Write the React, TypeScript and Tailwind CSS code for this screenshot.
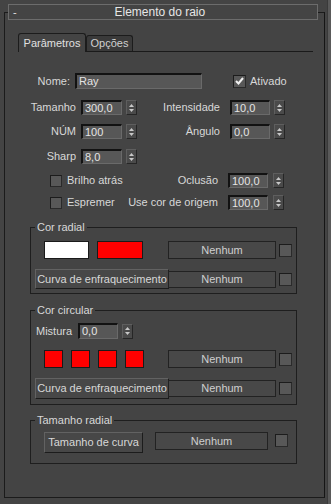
import React from 'react'

const Spinner = () => (
  <div className="w-[11px] h-[15px] shrink-0 bg-[#4a4a4a] border border-t-[#5e5e5e] border-l-[#5e5e5e] border-b-[#262626] border-r-[#262626] flex flex-col items-center justify-center gap-[2px]">
    <svg width="5" height="3" viewBox="0 0 5 3"><path d="M2.5 0 L5 3 L0 3 Z" fill="#c8c8c8" /></svg>
    <svg width="5" height="3" viewBox="0 0 5 3"><path d="M0 0 L5 0 L2.5 3 Z" fill="#c8c8c8" /></svg>
  </div>
)

const Field = ({ value, w, h = 'h-[15px]' }: { value: string; w: string; h?: string }) => (
  <div className={`${w} ${h} shrink-0 bg-[#575757] border border-t-[#121212] border-l-[#121212] border-b-[#6a6a6a] border-r-[#6a6a6a] border-t-2 border-l-2 pl-[2px] flex items-center text-[#e4e4e4] leading-none`}>
    {value}
  </div>
)

const Check = ({ on = false, size = 'w-[13px] h-[13px]' }: { on?: boolean; size?: string }) => (
  <div className={`${size} shrink-0 bg-[#585858] border border-t-[#1c1c1c] border-l-[#1c1c1c] border-b-[#2a2a2a] border-r-[#2a2a2a] flex items-center justify-center`}>
    {on && (
      <svg width="9" height="8" viewBox="0 0 9 8">
        <path d="M1 4 L3.5 6.5 L8 1" stroke="#f2f2f2" strokeWidth="2" fill="none" />
      </svg>
    )}
  </div>
)

const NoneBtn = ({ w = 'w-[108px]', h = 'h-[18px]', cls = '' }: { w?: string; h?: string; cls?: string }) => (
  <div className={`${w} ${h} ${cls} shrink-0 bg-[#484848] border border-[#222] flex items-center justify-center text-[#cfcfcf] leading-none`}>
    Nenhum
  </div>
)

const RaisedBtn = ({ label, w, h, cls = '' }: { label: string; w: string; h: string; cls?: string }) => (
  <div className={`${w} ${h} ${cls} shrink-0 bg-[#474747] border border-t-[#626262] border-l-[#626262] border-b-[#1c1c1c] border-r-[#1c1c1c] flex items-center justify-center text-[#d8d8d8] leading-none whitespace-nowrap`}>
    {label}
  </div>
)

const NumRow = ({ l1, v1, l2, v2, mt }: { l1: string; v1: string; l2: string; v2: string; mt: string }) => (
  <div className={`flex items-center h-[15px] ${mt}`}>
    <div className="w-[71px] text-right">{l1}</div>
    <div className="ml-[5px]"><Field value={v1} w="w-[41px]" /></div>
    <div className="ml-[4px]"><Spinner /></div>
    <div className="w-[83px] text-right">{l2}</div>
    <div className="ml-[10px]"><Field value={v2} w="w-[40px]" /></div>
    <div className="ml-[4px]"><Spinner /></div>
  </div>
)

const CheckRow = ({ c, l, v, mt }: { c: string; l: string; v: string; mt: string }) => (
  <div className={`flex items-center h-[15px] ${mt}`}>
    <div className="w-[213px] pl-[45px] flex items-center justify-between">
      <div className="flex items-center gap-[5px]">
        <Check size="w-[12px] h-[12px]" />
        <span>{c}</span>
      </div>
      <span>{l}</span>
    </div>
    <div className="ml-[10px]"><Field value={v} w="w-[40px]" /></div>
    <div className="ml-[5px]"><Spinner /></div>
  </div>
)

const Group = ({ title, mt, pb, children }: { title: string; mt: string; pb: string; children: React.ReactNode }) => (
  <fieldset className={`ml-[25px] w-[267px] border border-[#1e1e1e] ${mt} ${pb}`}>
    <legend className="ml-[4px] px-[2px] leading-[14px] text-[#d8d8d8]">{title}</legend>
    {children}
  </fieldset>
)

export default function App() {
  return (
    <div className="w-[331px] h-[504px] bg-[#444444] flex overflow-hidden text-[11px] text-[#d8d8d8] font-[family-name:'Liberation_Sans',Arial,sans-serif]">
      <div className="w-[327px] shrink-0">
        <div className="ml-[4px] mt-[12px] w-[321px] h-[486px] border border-[#1b1b1b] border-r-[#151515]">
          {/* rollout title */}
          <div className="-mt-[9px] ml-[3px] w-[310px] h-[16px] bg-[#444444] border border-[#6c6c6c] flex items-center relative">
            <span className="ml-[4px] text-[#e0e0e0]">-</span>
            <span className="flex-1 text-center pr-[14px] text-[#e6e6e6] text-[12px]">Elemento do raio</span>
          </div>

          {/* tabs */}
          <div className="mt-[13px] ml-[13px] w-[295px] h-[19px] border-b border-[#1a1a1a] flex items-end">
            <div className="w-[68px] h-[19px] -mb-px bg-[#444444] border border-b-0 border-[#1c1c1c] rounded-t-[3px] flex items-center justify-center text-[#e0e0e0]">
              Parâmetros
            </div>
            <div className="w-[47px] h-[16px] bg-[#3a3a3a] border border-b-0 border-[#1c1c1c] rounded-t-[3px] flex items-center justify-center text-[#d0d0d0]">
              Opções
            </div>
          </div>

          {/* name row */}
          <div className="flex items-center h-[16px] mt-[21px]">
            <div className="w-[65px] text-right">Nome:</div>
            <div className="ml-[5px]"><Field value="Ray" w="w-[127px]" h="h-[16px]" /></div>
            <div className="ml-[31px]"><Check on /></div>
            <span className="ml-[4px]">Ativado</span>
          </div>

          <NumRow l1="Tamanho" v1="300,0" l2="Intensidade" v2="10,0" mt="mt-[11px]" />
          <NumRow l1="NÚM" v1="100" l2="Ângulo" v2="0,0" mt="mt-[9px]" />

          <div className="flex items-center h-[15px] mt-[10px]">
            <div className="w-[71px] text-right">Sharp</div>
            <div className="ml-[5px]"><Field value="8,0" w="w-[41px]" /></div>
            <div className="ml-[4px]"><Spinner /></div>
          </div>

          <CheckRow c="Brilho atrás" l="Oclusão" v="100,0" mt="mt-[9px]" />
          <CheckRow c="Espremer" l="Use cor de origem" v="100,0" mt="mt-[7px]" />

          <Group title="Cor radial" mt="mt-[10px]" pb="pb-[4px]">
            <div className="flex items-center h-[18px] mt-[7px]">
              <div className="ml-[13px] w-[45px] h-[18px] bg-white border border-[#1a1a1a]" />
              <div className="ml-[8px] w-[46px] h-[18px] bg-[#ff0000] border border-[#1a1a1a]" />
              <NoneBtn cls="ml-[25px]" />
              <div className="ml-[3px]"><Check /></div>
            </div>
            <div className="flex items-center h-[20px] mt-[10px]">
              <RaisedBtn label="Curva de enfraquecimento" w="w-[134px]" h="h-[20px]" cls="ml-[4px]" />
              <NoneBtn h="h-[17px]" cls="-ml-px" />
              <div className="ml-[3px]"><Check /></div>
            </div>
          </Group>

          <Group title="Cor circular" mt="mt-[9px]" pb="pb-[5px]">
            <div className="flex items-center h-[16px] mt-[6px]">
              <div className="ml-[5px] w-[37px]">Mistura</div>
              <div className="ml-[5px]"><Field value="0,0" w="w-[40px]" h="h-[16px]" /></div>
              <div className="ml-[4px]"><Spinner /></div>
            </div>
            <div className="flex items-center h-[18px] mt-[11px]">
              <div className="ml-[13px] flex gap-[8px]">
                <div className="w-[19px] h-[18px] bg-[#ff0000] border border-[#1a1a1a]" />
                <div className="w-[19px] h-[18px] bg-[#ff0000] border border-[#1a1a1a]" />
                <div className="w-[19px] h-[18px] bg-[#ff0000] border border-[#1a1a1a]" />
                <div className="w-[19px] h-[18px] bg-[#ff0000] border border-[#1a1a1a]" />
              </div>
              <NoneBtn cls="ml-[24px]" />
              <div className="ml-[3px]"><Check /></div>
            </div>
            <div className="flex items-center h-[21px] mt-[10px]">
              <RaisedBtn label="Curva de enfraquecimento" w="w-[134px]" h="h-[21px]" cls="ml-[4px]" />
              <NoneBtn h="h-[17px]" cls="-ml-px" />
              <div className="ml-[3px]"><Check /></div>
            </div>
          </Group>

          <Group title="Tamanho radial" mt="mt-[8px]" pb="pb-[10px]">
            <div className="flex items-start h-[21px] mt-[5px]">
              <RaisedBtn label="Tamanho de curva" w="w-[99px]" h="h-[21px]" cls="ml-[13px]" />
              <NoneBtn w="w-[113px]" cls="ml-[12px]" />
              <div className="ml-[7px] mt-[2px]"><Check /></div>
            </div>
          </Group>
        </div>
      </div>
      <div className="w-[4px] h-full bg-[#5a5a5a] border-l border-[#3a3a3a]" />
    </div>
  )
}
